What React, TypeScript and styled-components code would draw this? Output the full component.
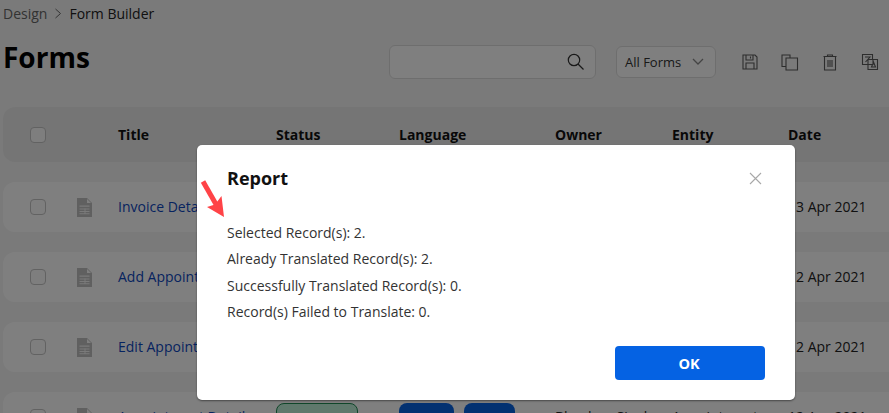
import React from "react";
import styled, { createGlobalStyle } from "styled-components";

const Global = createGlobalStyle`
  html, body { margin: 0; padding: 0; }
  body { width: 889px; height: 413px; overflow: hidden; background: #f5f5f5; font-family: "Open Sans", sans-serif; color: #222; }
`;

const Page = styled.div`
  position: relative;
  width: 889px;
  height: 413px;
  overflow: hidden;
`;

const Breadcrumb = styled.div`
  display: flex;
  align-items: center;
  height: 27px;
  padding-left: 3px;
  font-size: 14px;
`;

const Crumb = styled.span<{ $muted?: boolean }>`
  color: ${(p) => (p.$muted ? "#666" : "#222")};
`;

const CrumbSep = styled.svg`
  margin: 0 7px 0 7px;
  width: 8px;
  height: 11px;
`;

const TitleBar = styled.div`
  display: flex;
  align-items: center;
  height: 51px;
  padding: 0 0 0 3px;
  margin-top: 4px;
`;

const Heading = styled.h1`
  margin: 0;
  flex: 1;
  font-size: 28px;
  line-height: 32px;
  font-weight: 700;
  color: #000;
`;

const Controls = styled.div`
  display: flex;
  align-items: center;
  padding-top: 10px;
`;

const SearchBox = styled.div`
  display: flex;
  align-items: center;
  justify-content: flex-end;
  box-sizing: border-box;
  width: 207px;
  height: 34px;
  padding-right: 11px;
  border: 1px solid #ddd;
  border-radius: 6px;
  background: #fff;
`;

const Select = styled.div`
  display: flex;
  align-items: center;
  justify-content: space-between;
  box-sizing: border-box;
  width: 100px;
  height: 32px;
  margin-left: 20px;
  padding: 0 11px 0 8px;
  border: 1px solid #ddd;
  border-radius: 6px;
  background: #fff;
  font-size: 13px;
  color: #333;
`;

const Tools = styled.div`
  display: flex;
  align-items: center;
  gap: 20px;
  margin: 0 9px 0 24px;
`;

const ToolIcon = styled.svg`
  display: block;
  width: 20px;
  height: 20px;
  fill: none;
  stroke: #5a5a5a;
  stroke-width: 1.1;
`;

const columns = "115px 158px 123px 156px 117px 116px 1fr";

const HeaderRow = styled.div`
  display: grid;
  grid-template-columns: ${columns};
  align-items: center;
  height: 55px;
  margin: 25px 0 20px 3px;
  border-radius: 12px 0 0 12px;
  background: #ebebeb;
  font-size: 14px;
  font-weight: 700;
  color: #111;
`;

const Row = styled.div`
  display: grid;
  grid-template-columns: ${columns};
  align-items: center;
  box-sizing: border-box;
  height: 50px;
  margin: 0 0 20px 3px;
  border-radius: 12px 0 0 12px;
  background: #fff;
  font-size: 14px;
  line-height: 19px;
  color: #222;
  white-space: nowrap;
`;

const SelectCell = styled.div`
  display: flex;
  align-items: center;
  padding-left: 27px;
`;

const Check = styled.span`
  display: block;
  box-sizing: border-box;
  width: 16px;
  height: 16px;
  border: 1px solid #c4c4c4;
  border-radius: 4px;
  background: #fcfcfc;
`;

const DocIcon = styled.svg`
  width: 15px;
  height: 19px;
  margin-left: 31px;
`;

const TitleLink = styled.a`
  display: block;
  margin-bottom: 2px;
  color: #0d47c0;
  white-space: nowrap;
`;

const TextCell = styled.div`
  margin-bottom: 2px;
`;

const Badge = styled.span`
  display: block;
  box-sizing: border-box;
  width: 82px;
  height: 28px;
  border: 1px solid #1e8a52;
  border-radius: 8px;
  background: #bff0d8;
`;

const LangCell = styled.div`
  display: flex;
  gap: 10px;
`;

const LangPill = styled.span<{ $w: number }>`
  display: block;
  width: ${(p) => p.$w}px;
  height: 28px;
  border-radius: 8px;
  background: #0562e3;
`;

const Overlay = styled.div`
  position: absolute;
  inset: 0;
  background: rgba(0, 0, 0, 0.5);
`;

const Modal = styled.div`
  position: absolute;
  left: 197px;
  top: 145px;
  box-sizing: border-box;
  display: flex;
  flex-direction: column;
  width: 598px;
  height: 255px;
  padding: 19px 30px 20px 30px;
  border-radius: 5px;
  background: #fff;
  box-shadow: 0 1px 2px rgba(0, 0, 0, 0.45);
`;

const ModalHead = styled.div`
  display: flex;
  align-items: center;
  justify-content: space-between;
  height: 28px;
`;

const ModalTitle = styled.h2`
  margin: 0;
  font-size: 18px;
  font-weight: 700;
  color: #111;
`;

const CloseIcon = styled.svg`
  width: 13px;
  height: 13px;
  margin-right: 3px;
  stroke: #a8a8a8;
  stroke-width: 1.1;
`;

const Lines = styled.div`
  margin-top: 28px;
  flex: 1;
`;

const Line = styled.p`
  margin: 0;
  height: 26.4px;
  font-size: 14px;
  line-height: 26.4px;
  color: #333;
`;

const Footer = styled.div`
  display: flex;
  justify-content: flex-end;
`;

const OkButton = styled.button`
  width: 150px;
  height: 34px;
  padding: 0 2px 0 0;
  border: 0;
  border-radius: 4px;
  background: #0562e3;
  color: #fff;
  font-family: inherit;
  font-size: 14.5px;
  font-weight: 700;
`;

const Arrow = styled.svg`
  position: absolute;
  left: 199px;
  top: 179px;
  width: 30px;
  height: 40px;
`;

const Doc = () => (
  <DocIcon viewBox="0 0 15 19">
    <path d="M0 0h10l5 5v14H0z" fill="#c0c0c0" />
    <path d="M10 1v4h4z" fill="#fff" />
    <path d="M2.500 7.500h10v1.200h-10zM2.500 10.500h10v1h-10zM2.500 13h10v1h-10zM2.500 15.200h10v1h-10z" fill="#f4f4f4" />
    <path d="M8 10.500v5.500" stroke="#f4f4f4" />
  </DocIcon>
);

const rows = [
  { title: "Invoice Details", date: "13 Apr 2021" },
  { title: "Add Appointment", date: "12 Apr 2021" },
  { title: "Edit Appointment", date: "12 Apr 2021" },
];

export default function App() {
  return (
    <Page>
      <Global />
      <Breadcrumb>
        <Crumb $muted>Design</Crumb>
        <CrumbSep viewBox="0 0 8 11" fill="none" stroke="#666"><path d="M1.500 1l5 4.500-5 4.500" /></CrumbSep>
        <Crumb>Form Builder</Crumb>
      </Breadcrumb>
      <TitleBar>
        <Heading>Forms</Heading>
        <Controls>
          <SearchBox>
            <svg width="17" height="17" viewBox="0 0 17 17" fill="none" stroke="#333" strokeWidth="1.200">
              <circle cx="7" cy="7" r="5.700" /><path d="M11 11l5.500 5.500" />
            </svg>
          </SearchBox>
          <Select>
            All Forms
            <svg width="12" height="8" viewBox="0 0 12 8" fill="none" stroke="#888" strokeWidth="1.300"><path d="M1 1l5 5 5-5" /></svg>
          </Select>
          <Tools>
            <ToolIcon viewBox="0 0 20 20">
              <path d="M3 3h12l2 2v12H3z" /><path d="M6 3v5h7V3M10.500 4.500v2M6 17v-6h8v6" />
            </ToolIcon>
            <ToolIcon viewBox="0 0 20 20">
              <path d="M6 14.500H2V3h8v3" /><path d="M6 6h11.500v12H6z" />
            </ToolIcon>
            <ToolIcon viewBox="0 0 20 20">
              <path d="M3.500 4.500h13M7.500 4.500V3h5v1.500M4.500 4.500V18h11V4.500M8 8v7M10 8v7M12 8v7" />
            </ToolIcon>
            <ToolIcon viewBox="0 0 20 20">
              <path d="M2.500 2.500h10v5h5v10h-9.500v-5h-5.500z" /><path d="M8 7.500h5v5H8zM5 5h5L5.500 10M11.500 15l2-5 2 5z" />
            </ToolIcon>
          </Tools>
        </Controls>
      </TitleBar>
      <HeaderRow>
        <SelectCell><Check /></SelectCell>
        <div>Title</div>
        <div>Status</div>
        <div>Language</div>
        <div>Owner</div>
        <div>Entity</div>
        <div>Date</div>
      </HeaderRow>
      {rows.map((r) => (
        <Row key={r.title}>
          <SelectCell><Check /><Doc /></SelectCell>
          <TitleLink>{r.title}</TitleLink>
          <div />
          <div />
          <div />
          <div />
          <TextCell>{r.date}</TextCell>
        </Row>
      ))}
      <Row>
        <SelectCell><Check /><Doc /></SelectCell>
        <TitleLink>Appointment Details</TitleLink>
        <Badge />
        <LangCell><LangPill $w={55} /><LangPill $w={51} /></LangCell>
        <TextCell>Bhushan Singh</TextCell>
        <TextCell>Appointment</TextCell>
        <TextCell>12 Apr 2021</TextCell>
      </Row>
      <Overlay />
      <Modal>
        <ModalHead>
          <ModalTitle>Report</ModalTitle>
          <CloseIcon viewBox="0 0 13 13"><path d="M1 1l11 11M12 1L1 12" /></CloseIcon>
        </ModalHead>
        <Lines>
          <Line>Selected Record(s): 2.</Line>
          <Line>Already Translated Record(s): 2.</Line>
          <Line>Successfully Translated Record(s): 0.</Line>
          <Line>Record(s) Failed to Translate: 0.</Line>
        </Lines>
        <Footer><OkButton>OK</OkButton></Footer>
      </Modal>
      <Arrow viewBox="0 0 30 40">
        <path d="M4 2.500L18 27" stroke="#ff4347" strokeWidth="5" fill="none" />
        <path d="M25 38L8 28l8-2.500L22.500 17z" fill="#ff4347" />
      </Arrow>
    </Page>
  );
}
